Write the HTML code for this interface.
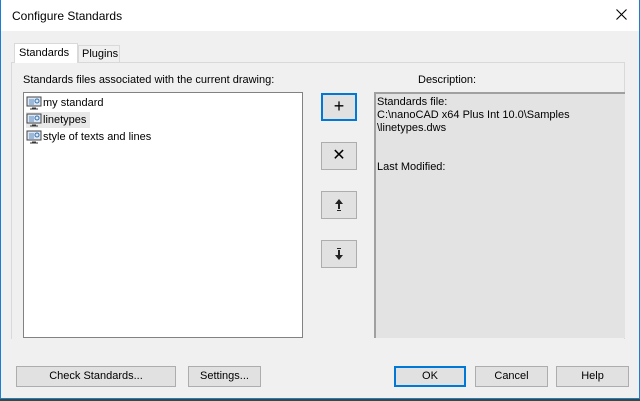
<!DOCTYPE html>
<html><head><meta charset="utf-8"><style>
*{margin:0;padding:0;box-sizing:border-box}
body{width:640px;height:401px;background:#3a4a3a;font-family:"Liberation Sans",sans-serif;font-size:11px;color:#000;position:relative;overflow:hidden}
.win{position:absolute;left:0;top:0;width:640px;height:399px;background:#f0f0f0;border:1px solid #1a7fd4;border-top:none}
.title{position:absolute;left:0;top:0;width:638px;height:31px;background:#fff}
.title span{position:absolute;left:11px;top:9px;font-size:12px}
.close{position:absolute;right:12px;top:9px}
.a{position:absolute}
.panel{position:absolute;left:10px;top:62px;width:614px;height:277px;border:1px solid #d9d9d9;border-bottom:none;background:#f0f0f0}
.tab{position:absolute;background:#f0f0f0;border:1px solid #d9d9d9;border-bottom:none;padding:3px 4px 0}
.btn{position:absolute;background:#e1e1e1;border:1px solid #adadad;text-align:center}
.list{position:absolute;left:22px;top:92px;width:280px;height:246px;background:#fff;border:1px solid #828282}
.desc{position:absolute;left:373px;top:92px;width:251px;height:246px;background:#e3e3e3;border-left:2px solid #a0a0a0;border-top:2px solid #a0a0a0;padding:2px 1px;line-height:13px}
.it{position:absolute;left:2px;height:16px;line-height:16px;padding-left:17px}
.ic{position:absolute;left:0;top:1px;width:16px;height:14px}
</style></head><body>
<div class="win">
<div class="title"><span>Configure Standards</span><svg class="close" width="11" height="11" viewBox="0 0 11 11"><path d="M0.5 0.5L10.5 10.5M10.5 0.5L0.5 10.5" stroke="#000" stroke-width="1.1"/></svg></div>
<div class="panel"></div>
<div class="tab" style="left:13px;top:43px;width:64px;height:20px;background:#fff;font-size:11px">Standards</div>
<div class="tab" style="left:77px;top:45px;width:42px;height:17px;padding:2px 2px 0 3px">Plugins</div>
<div class="a" style="left:22px;top:74px">Standards files associated with the current drawing:</div>
<div class="a" style="left:417px;top:74px">Description:</div>
<div class="list">
 <div class="it" style="top:2px"><svg class="ic" viewBox="0 0 16 14"><rect x="1" y="1" width="14" height="9" fill="#dde8f4" stroke="#444"/><path d="M3 4h5M3 6h5M3 8h5" stroke="#5a8ac0"/><circle cx="11" cy="5" r="2" fill="none" stroke="#3070b0"/><path d="M6 12h4M4 13h8" stroke="#333"/></svg>my standard</div>
 <div class="it" style="top:19px;background:#e8e8e8;width:64px"><svg class="ic" viewBox="0 0 16 14"><rect x="1" y="1" width="14" height="9" fill="#dde8f4" stroke="#444"/><path d="M3 4h5M3 6h5M3 8h5" stroke="#5a8ac0"/><circle cx="11" cy="5" r="2" fill="none" stroke="#3070b0"/><path d="M6 12h4M4 13h8" stroke="#333"/></svg>linetypes</div>
 <div class="it" style="top:36px"><svg class="ic" viewBox="0 0 16 14"><rect x="1" y="1" width="14" height="9" fill="#dde8f4" stroke="#444"/><path d="M3 4h5M3 6h5M3 8h5" stroke="#5a8ac0"/><circle cx="11" cy="5" r="2" fill="none" stroke="#3070b0"/><path d="M6 12h4M4 13h8" stroke="#333"/></svg>style of texts and lines</div>
</div>
<div class="btn" style="left:320px;top:93px;width:36px;height:28px;border:2px solid #0078d7;font-size:18px;line-height:23px">+</div>
<div class="btn" style="left:320px;top:142px;width:36px;height:28px;font-size:16px;line-height:26px">✕</div>
<div class="btn" style="left:320px;top:191px;width:36px;height:28px"><svg width="10" height="14" style="margin-top:6px" viewBox="0 0 10 14"><path d="M5 1L1 6h3v5h2V6h3z" fill="#222"/><path d="M3 12.5h4" stroke="#222"/></svg></div>
<div class="btn" style="left:320px;top:240px;width:36px;height:28px"><svg width="10" height="14" style="margin-top:6px" viewBox="0 0 10 14"><path d="M3 1.5h4" stroke="#222"/><path d="M4 3h2v5h3l-4 5-4-5h3z" fill="#222"/></svg></div>
<div class="desc">Standards file:<br>C:\nanoCAD x64 Plus Int 10.0\Samples<br>\linetypes.dws<br><br><br>Last Modified:</div>
<div class="btn" style="left:15px;top:366px;width:160px;height:21px;line-height:19px">Check Standards...</div>
<div class="btn" style="left:187px;top:366px;width:73px;height:21px;line-height:19px">Settings...</div>
<div class="btn" style="left:393px;top:366px;width:72px;height:21px;line-height:17px;border:2px solid #0078d7">OK</div>
<div class="btn" style="left:474px;top:366px;width:73px;height:21px;line-height:19px">Cancel</div>
<div class="btn" style="left:555px;top:366px;width:73px;height:21px;line-height:19px">Help</div>
</div>
</body></html>
